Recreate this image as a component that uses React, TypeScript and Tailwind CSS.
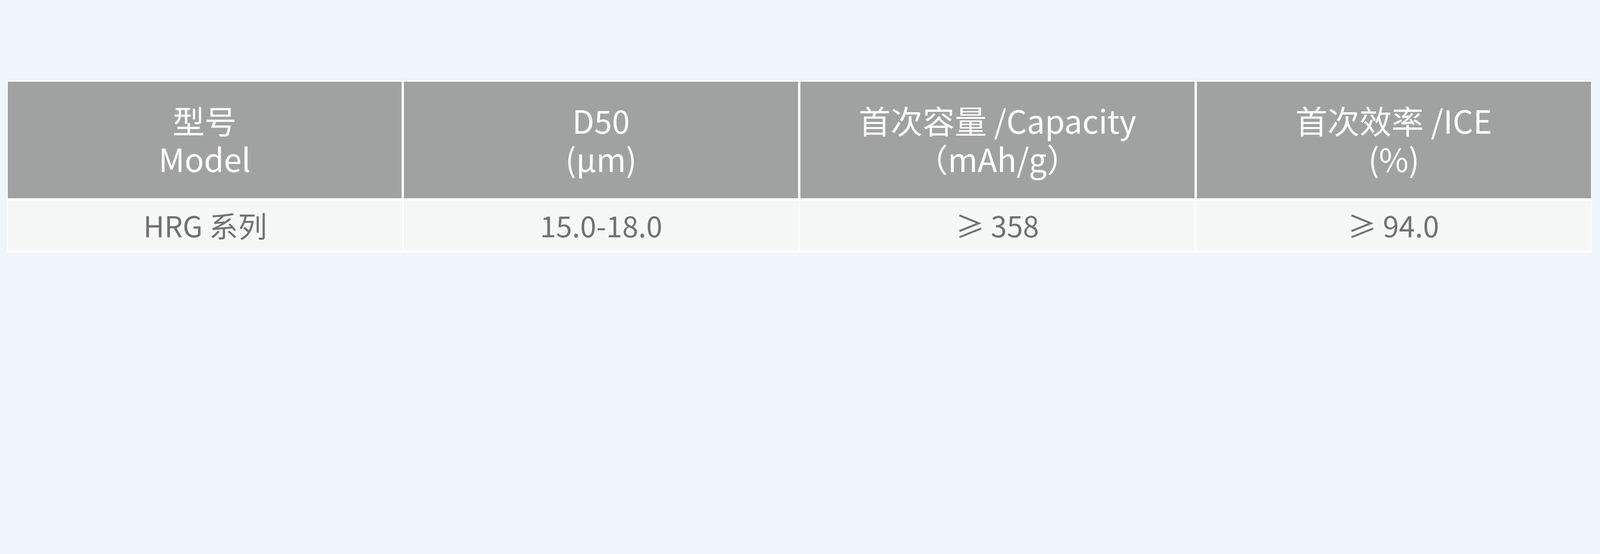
import React from "react"

// header labels, two lines each
const headers: [string, string][] = [
  ["型号", "Model"],
  ["D50", "(μm)"],
  ["首次容量 /Capacity", "（mAh/g）"],
  ["首次效率 /ICE", "(%)"],
]

const values = ["HRG 系列", "15.0-18.0", "≥ 358", "≥ 94.0"]

export default function App() {
  return (
    <div className="min-h-screen w-full bg-[#eff4fd] pt-[206px] pl-[17px] pr-[21px] font-['Noto_Sans_CJK_SC','Noto_Sans',sans-serif]">
      <div className="bg-white px-[2.5px] pt-[2.5px] pb-[6.5px]">
        <div className="grid grid-cols-4 gap-[6px] h-[298px]">
          {headers.map(([top, bottom], i) => (
            <div
              key={i}
              className="flex items-center justify-center bg-[#a0a2a1] border-y border-[#959796] text-white text-[82px] leading-[98px] text-center pb-[4px]"
            >
              <p>
                {top}
                <br />
                {bottom}
              </p>
            </div>
          ))}
        </div>
        <div className="grid grid-cols-4 gap-[2.5px] mt-[6px] h-[128px]">
          {values.map((v, i) => (
            <div
              key={i}
              className="flex items-center justify-center bg-[#f6f8f7] text-[#717171] text-[74px] leading-[90px] pb-[3px]"
            >
              {v}
            </div>
          ))}
        </div>
      </div>
    </div>
  )
}
